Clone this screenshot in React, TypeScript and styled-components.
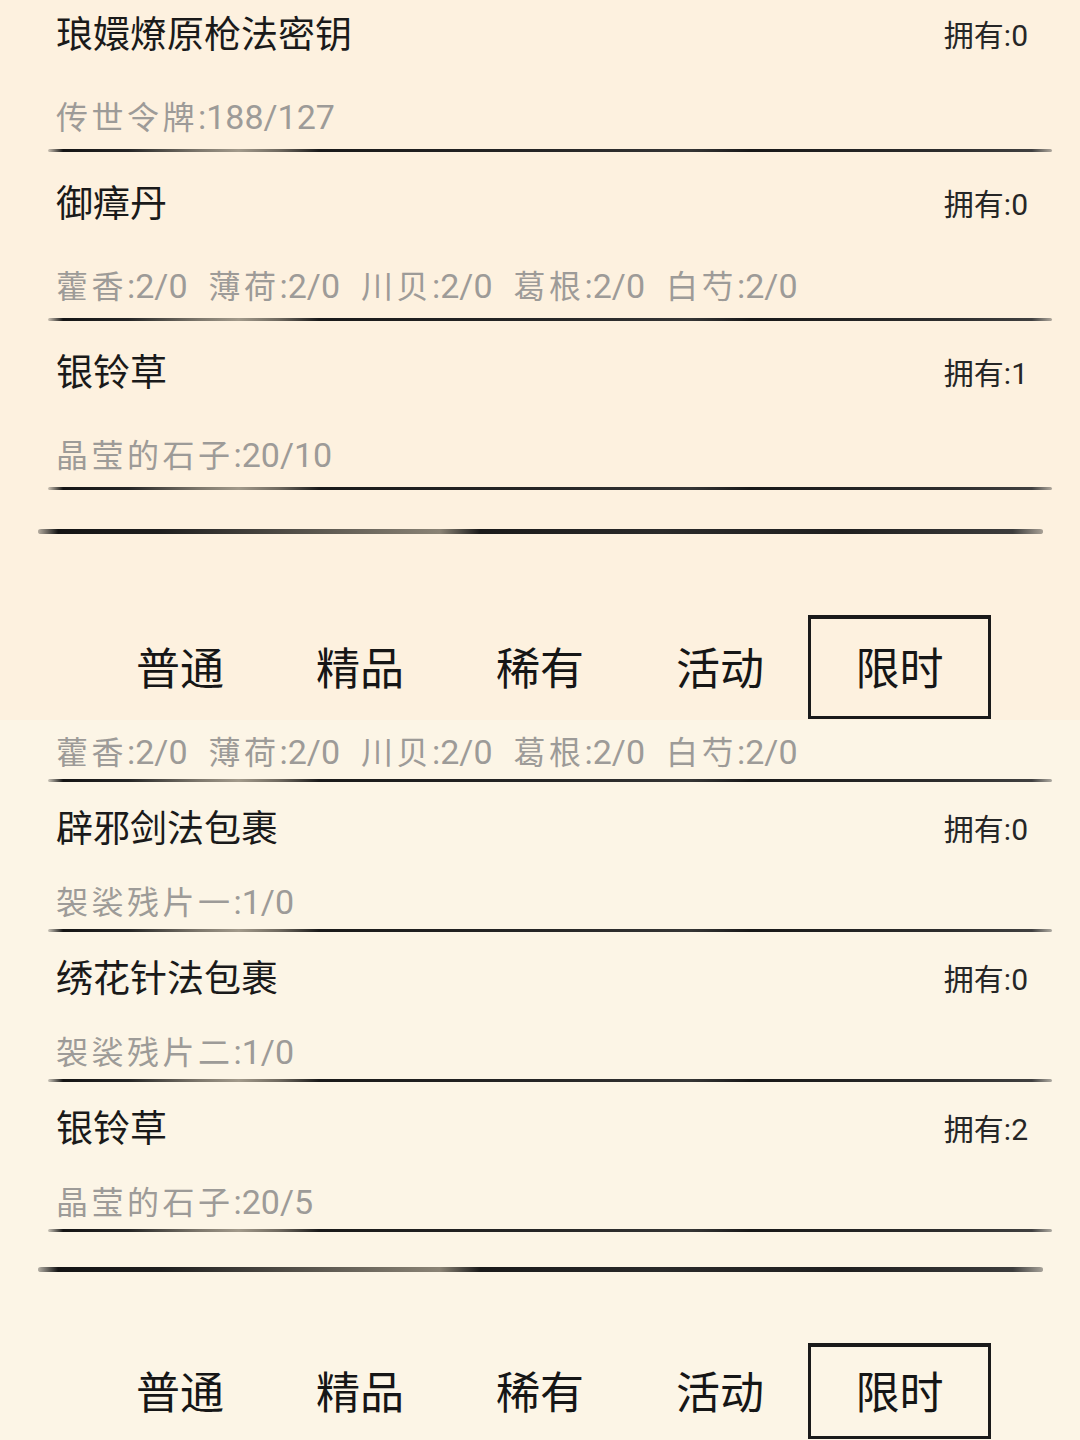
import React from "react";
import styled, { createGlobalStyle } from "styled-components";

const GlobalStyle = createGlobalStyle`
  html, body {
    margin: 0;
    padding: 0;
    background: #fcf5e6;
  }
  body {
    font-family: Roboto, "Noto Sans CJK SC", "Noto Sans", sans-serif;
  }
`;

// spacing of one screen capture
type Metrics = {
  bg: string;
  listOffset: number;
  padTop: number;
  subGap: number;
  divGap: number;
  ruleGap: number;
  tabsGap: number;
  tabHeight: number;
};

const topShot: Metrics = {
  bg: "#fdf1df",
  listOffset: -17.5,
  padTop: 30.5,
  subGap: 36,
  divGap: 13.5,
  ruleGap: 39,
  tabsGap: 81.5,
  tabHeight: 104,
};

const bottomShot: Metrics = {
  bg: "#fcf5e6",
  listOffset: 10,
  padTop: 25.5,
  subGap: 27,
  divGap: 8.5,
  ruleGap: 35,
  tabsGap: 71.5,
  tabHeight: 96,
};

const Page = styled.div`
  display: flex;
  flex-direction: column;
  width: 1080px;
`;

const Panel = styled.section<{ $bg: string }>`
  height: 720px;
  overflow: hidden;
  background: ${(p) => p.$bg};
  display: flex;
  flex-direction: column;
`;

const List = styled.div<{ $offset: number }>`
  margin-top: ${(p) => p.$offset}px;
  display: flex;
  flex-direction: column;
`;

const Item = styled.div<{ $pad: number }>`
  padding: ${(p) => p.$pad}px 28px 0 48px;
  display: flex;
  flex-direction: column;
`;

const Head = styled.div`
  height: 46px;
  padding: 0 24px 0 8px;
  display: flex;
  align-items: center;
  justify-content: space-between;
`;

const Title = styled.span`
  font-size: 37px;
  color: #1a1a1a;
  line-height: 46px;
`;

const Own = styled.span`
  font-size: 30px;
  color: #262626;
  line-height: 46px;
`;

const Sub = styled.div<{ $gap: number }>`
  margin-top: ${(p) => p.$gap}px;
  height: 40px;
  padding-left: 8px;
  display: flex;
  gap: 21px;
  align-items: center;
  color: #9d9b98;
  white-space: nowrap;
`;

const Need = styled.span`
  display: inline-flex;
  align-items: baseline;
`;

const NeedName = styled.span`
  font-size: 32px;
  letter-spacing: 3.5px;
`;

const NeedCount = styled.span`
  font-size: 34px;
`;

const Divider = styled.div<{ $gap: number }>`
  margin-top: ${(p) => p.$gap}px;
  height: 3px;
  border-radius: 2px;
  background: linear-gradient(
    90deg,
    rgba(20, 20, 20, 0.2) 0%,
    #151515 1.5%,
    #252525 8%,
    #7d776c 15%,
    #a29a8b 19%,
    #6f695f 23%,
    #1a1a1a 27%,
    #262626 50%,
    #353535 64%,
    #181818 70%,
    #2e2e2e 90%,
    #404040 98%,
    rgba(60, 60, 60, 0.4) 100%
  );
`;

const Rule = styled.div<{ $gap: number }>`
  margin: ${(p) => p.$gap}px 37px 0 38px;
  height: 5px;
  border-radius: 3px / 2px;
  background: linear-gradient(
    90deg,
    rgba(20, 20, 20, 0.3) 0%,
    #141414 2%,
    #1e1e1e 12%,
    #8a8375 40%,
    #1a1a1a 44%,
    #2a2a2a 62%,
    #1f1f1f 80%,
    #3c3c3c 97%,
    rgba(40, 40, 40, 0.4) 100%
  );
`;

const Tabs = styled.div<{ $gap: number }>`
  margin-top: ${(p) => p.$gap}px;
  padding-left: 90px;
  display: grid;
  grid-template-columns: repeat(5, 180px);
`;

const Tab = styled.div<{ $active?: boolean; $h: number }>`
  height: ${(p) => p.$h}px;
  box-sizing: border-box;
  display: flex;
  align-items: center;
  justify-content: center;
  padding-bottom: 4px;
  font-size: 44px;
  color: #161616;
  border: 3px solid ${(p) => (p.$active ? "#1a1a1a" : "transparent")};
  border-top-width: 4px;
  margin-left: ${(p) => (p.$active ? "-2px" : "0")};
  margin-right: ${(p) => (p.$active ? "-1px" : "0")};
`;

type Need = [string, string];
type Entry = { name?: string; own?: number; needs: Need[] };

const herbs: Need[] = [
  ["藿香", ":2/0"],
  ["薄荷", ":2/0"],
  ["川贝", ":2/0"],
  ["葛根", ":2/0"],
  ["白芍", ":2/0"],
];

const topItems: Entry[] = [
  { name: "琅嬛燎原枪法密钥", own: 0, needs: [["传世令牌", ":188/127"]] },
  { name: "御瘴丹", own: 0, needs: herbs },
  { name: "银铃草", own: 1, needs: [["晶莹的石子", ":20/10"]] },
];

// first entry is scrolled half out of view: only its requirements show
const bottomItems: Entry[] = [
  { needs: herbs },
  { name: "辟邪剑法包裹", own: 0, needs: [["袈裟残片一", ":1/0"]] },
  { name: "绣花针法包裹", own: 0, needs: [["袈裟残片二", ":1/0"]] },
  { name: "银铃草", own: 2, needs: [["晶莹的石子", ":20/5"]] },
];

const tabs = ["普通", "精品", "稀有", "活动", "限时"];

function Shot({ items, m }: { items: Entry[]; m: Metrics }) {
  return (
    <Panel $bg={m.bg}>
      <List $offset={m.listOffset}>
        {items.map((it, i) => (
          <Item key={i} $pad={it.name ? m.padTop : 0}>
            {it.name && (
              <Head>
                <Title>{it.name}</Title>
                <Own>拥有:{it.own}</Own>
              </Head>
            )}
            <Sub $gap={it.name ? m.subGap : 0}>
              {it.needs.map(([n, c]) => (
                <Need key={n}>
                  <NeedName>{n}</NeedName>
                  <NeedCount>{c}</NeedCount>
                </Need>
              ))}
            </Sub>
            <Divider $gap={m.divGap} />
          </Item>
        ))}
      </List>
      <Rule $gap={m.ruleGap} />
      <Tabs $gap={m.tabsGap}>
        {tabs.map((t) => (
          <Tab key={t} $h={m.tabHeight} $active={t === "限时"}>
            {t}
          </Tab>
        ))}
      </Tabs>
    </Panel>
  );
}

export default function App() {
  return (
    <Page>
      <GlobalStyle />
      <Shot items={topItems} m={topShot} />
      <Shot items={bottomItems} m={bottomShot} />
    </Page>
  );
}
